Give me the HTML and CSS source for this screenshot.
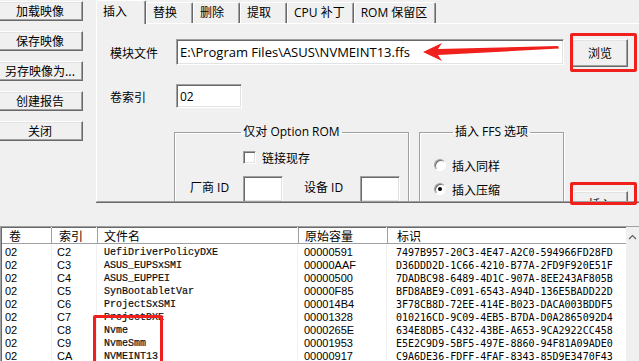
FILE: index.html
```html
<!DOCTYPE html>
<html>
<head>
<meta charset="utf-8">
<link rel="stylesheet" href="styles.css">
</head>
<body>
<div class="window">
  <div class="top">
    <div class="sidebar">
      <button class="btn side-btn">加载映像</button>
      <button class="btn side-btn">保存映像</button>
      <button class="btn side-btn">另存映像为...</button>
      <button class="btn side-btn">创建报告</button>
      <button class="btn side-btn">关闭</button>
    </div>
    <div class="tabctl">
      <div class="tabstrip">
        <div class="tab active">插入</div>
        <div class="tab">替换</div>
        <div class="tab">删除</div>
        <div class="tab">提取</div>
        <div class="tab">CPU 补丁</div>
        <div class="tab">ROM 保留区</div>
      </div>
      <div class="panel">
        <div class="row row-file">
          <span class="label">模块文件</span>
          <div class="input input-file">E:\Program Files\ASUS\NVMEINT13.ffs</div>
          <button class="btn browse">浏览</button>
        </div>
        <div class="row row-vol">
          <span class="label">卷索引</span>
          <div class="input input-vol">02</div>
        </div>
        <div class="groups">
          <fieldset class="group group-rom">
            <legend>仅对 Option ROM</legend>
            <div class="chk-row"><span class="chk"></span><span>链接现存</span></div>
            <div class="id-row">
              <span class="id-label">厂商 ID</span><div class="input input-id"></div>
              <span class="id-label id-label2">设备 ID</span><div class="input input-id"></div>
            </div>
          </fieldset>
          <fieldset class="group group-ffs">
            <legend>插入 FFS 选项</legend>
            <div class="radio-row"><span class="radio"></span><span>插入同样</span></div>
            <div class="radio-row"><span class="radio checked"></span><span>插入压缩</span></div>
          </fieldset>
          <button class="btn insert-btn">插入</button>
        </div>
      </div>
    </div>
  </div>
  <div class="list">
    <div class="list-main">
      <div class="lrow lhead">
        <div class="c c1">卷</div><div class="c c2">索引</div><div class="c c3">文件名</div><div class="c c4">原始容量</div><div class="c c5">标识</div>
      </div>
      <div class="lrow"><div class="c c1">02</div><div class="c c2">C2</div><div class="c c3 mono">UefiDriverPolicyDXE</div><div class="c c4">00000591</div><div class="c c5 mono2">7497B957-20C3-4E47-A2C0-594966FD28FD</div></div>
      <div class="lrow"><div class="c c1">02</div><div class="c c2">C3</div><div class="c c3 mono">ASUS_EUPSxSMI</div><div class="c c4">00000AAF</div><div class="c c5 mono2">D36DDD2D-1C66-4210-B77A-2FD9F920E51F</div></div>
      <div class="lrow"><div class="c c1">02</div><div class="c c2">C4</div><div class="c c3 mono">ASUS_EUPPEI</div><div class="c c4">00000500</div><div class="c c5 mono2">7DADBC98-6489-4D1C-907A-8EE243AF805B</div></div>
      <div class="lrow"><div class="c c1">02</div><div class="c c2">C5</div><div class="c c3 mono">SynBootabletVar</div><div class="c c4">00000F85</div><div class="c c5 mono2">BFD8ABE9-C091-6543-A94D-136E5BADD22D</div></div>
      <div class="lrow"><div class="c c1">02</div><div class="c c2">C6</div><div class="c c3 mono">ProjectSxSMI</div><div class="c c4">000014B4</div><div class="c c5 mono2">3F78CB8D-72EE-414E-B023-DACA003BDDF5</div></div>
      <div class="lrow"><div class="c c1">02</div><div class="c c2">C7</div><div class="c c3 mono">ProjectDXE</div><div class="c c4">00001328</div><div class="c c5 mono2">010216CD-9C09-4EB5-B7DA-D0A2865092D4</div></div>
      <div class="lrow"><div class="c c1">02</div><div class="c c2">C8</div><div class="c c3 mono">Nvme</div><div class="c c4">0000265E</div><div class="c c5 mono2">634E8DB5-C432-43BE-A653-9CA2922CC458</div></div>
      <div class="lrow"><div class="c c1">02</div><div class="c c2">C9</div><div class="c c3 mono">NvmeSmm</div><div class="c c4">00001953</div><div class="c c5 mono2">E5E2C9D9-5BF5-497E-8860-94F81A09ADE0</div></div>
      <div class="lrow"><div class="c c1">02</div><div class="c c2">CA</div><div class="c c3 mono">NVMEINT13</div><div class="c c4">00000917</div><div class="c c5 mono2">C9A6DE36-FDFF-4FAF-8343-85D9E3470F43</div></div>
    </div>
    <div class="vscroll">
      <svg class="up-arrow" width="9" height="6" viewBox="0 0 9 6"><path d="M1 5 L4.5 1.5 L8 5" fill="none" stroke="#606060" stroke-width="1.2"/></svg>
    </div>
  </div>

  <div class="mark mark-browse"></div>
  <div class="mark mark-insert"></div>
  <div class="mark mark-list"></div>
  <svg class="arrow" width="639" height="361" viewBox="0 0 639 361">
    <polygon points="423,52 442,43 438,49 558,46 559,48.5 438,55 442,61" fill="#f0201c"/>
  </svg>
</div>
</body>
</html>
```

FILE: styles.css
```css
* { box-sizing: border-box; }
html, body { margin: 0; padding: 0; }
body {
  width: 639px;
  height: 361px;
  overflow: hidden;
  background: #f0f0f0;
  font-family: "Open Sans", "Noto Sans CJK SC", sans-serif;
  font-size: 12px;
  color: #000;
}
.window {
  position: relative;
  width: 639px;
  height: 361px;
}
.top {
  display: flex;
  height: 226px;
}
.sidebar {
  width: 99px;
  flex: none;
  display: flex;
  flex-direction: column;
  gap: 10px;
  padding-top: 1px;
  margin-left: -3px;
}
.btn {
  font-family: "Noto Sans CJK SC", sans-serif;
  font-size: 12px;
  background: #f0f0f0;
  border: 1px solid;
  border-color: #fff #696969 #696969 #fff;
  box-shadow: inset -1px -1px 0 #a0a0a0, inset 1px 1px 0 #e3e3e3;
  padding: 0;
  color: #000;
  line-height: 1;
}
.side-btn {
  width: 86px;
  height: 20px;
}
.tabctl {
  width: 545px;
  flex: none;
}
.tabstrip {
  display: flex;
  height: 23px;
  align-items: flex-end;
  padding-left: 2px;
}
.tab {
  font-family: "Open Sans", "Noto Sans CJK SC", sans-serif;
  height: 21px;
  min-width: 47px;
  padding: 0 8px 0 6px;
  line-height: 19px;
  border: 1px solid;
  border-bottom: none;
  border-color: #fff #696969 transparent #fff;
  box-shadow: inset -1px 0 0 #a0a0a0;
  border-radius: 2px 2px 0 0;
  white-space: nowrap;
  font-size: 12px;
}
.tab.active {
  height: 24px;
  min-width: 50px;
  margin-bottom: -1px;
  margin-left: -2px;
  padding: 0 6px 0 6px;
  line-height: 22px;
  background: #f0f0f0;
  position: relative;
  z-index: 1;
}
.panel {
  height: 179px;
  border-top: 1px solid #fff;
  border-left: 1px solid #fff;
  border-bottom: 1px solid #a0a0a0;
  box-shadow: 0 1px 0 #696969;
  padding: 13px 0 0 13px;
  overflow: hidden;
  position: relative;
}
.row {
  display: flex;
  align-items: center;
}
.label {
  font-family: "Noto Sans CJK SC", sans-serif;
  width: 66px;
  flex: none;
}
.input {
  background: #fff;
  border: 1px solid;
  border-color: #a0a0a0 #fff #fff #a0a0a0;
  box-shadow: inset 1px 1px 0 #696969, inset -1px -1px 0 #e3e3e3;
  padding: 0 3px;
  display: flex;
  align-items: center;
  white-space: nowrap;
}
.input-file {
  width: 388px;
  height: 26px;
  font-size: 13px;
}
.browse {
  width: 56px;
  height: 28px;
  margin-left: 8px;
  margin-top: 2px;
}
.row-vol {
  margin-top: 17px;
}
.input-vol {
  width: 66px;
  height: 24px;
}
.groups {
  display: flex;
  align-items: flex-start;
  margin-top: 16px;
  margin-left: 64px;
  gap: 10px;
}
.group {
  margin: 0;
  padding: 0;
  border: 1px solid #a0a0a0;
  box-shadow: inset 1px 1px 0 #fff, 1px 1px 0 #fff;
  height: 120px;
  font-family: "Noto Sans CJK SC", sans-serif;
}
.group legend {
  margin: 0 auto;
  padding: 0 2px;
  line-height: 16px;
  font-family: "Open Sans", "Noto Sans CJK SC", sans-serif;
}
.group-rom { width: 235px; }
.group-ffs { width: 145px; }
.chk-row {
  display: flex;
  align-items: center;
  gap: 6px;
  margin: 9px 0 0 68px;
}
.chk {
  width: 13px;
  height: 13px;
  background: #fff;
  border: 1px solid;
  border-color: #a0a0a0 #fff #fff #a0a0a0;
  box-shadow: inset 1px 1px 0 #696969, inset -1px -1px 0 #e3e3e3;
}
.id-row {
  display: flex;
  align-items: flex-start;
  margin-top: 10px;
  padding-left: 15px;
}
.id-label {
  font-family: "Open Sans", "Noto Sans CJK SC", sans-serif;
  width: 53px;
  line-height: 20px;
  padding-top: 2px;
}
.id-label2 {
  width: 56px;
  margin-left: 21px;
}
.input-id {
  width: 40px;
  height: 26px;
}
.radio-row {
  display: flex;
  align-items: center;
  gap: 6px;
  margin-left: 14px;
  height: 16px;
}
.radio-row:first-of-type { margin-top: 17px; }
.radio-row + .radio-row { margin-top: 8px; }
.radio {
  width: 12px;
  height: 12px;
  border-radius: 50%;
  background: #fff;
  border: 1px solid;
  border-color: #a0a0a0 #fff #fff #a0a0a0;
  box-shadow: inset 1px 1px 0 #696969;
  position: relative;
}
.radio.checked::after {
  content: "";
  position: absolute;
  left: 3px;
  top: 3px;
  width: 4px;
  height: 4px;
  border-radius: 50%;
  background: #000;
}
.insert-btn {
  width: 55px;
  height: 26px;
  margin-top: 67px;
  margin-left: -1px;
}

/* list */
.list {
  display: flex;
  height: 135px;
  background: #fff;
  border-top: 1px solid #a0a0a0;
  border-left: 1px solid #a0a0a0;
  box-shadow: inset 1px 1px 0 #696969;
}
.list-main {
  flex: 1;
  overflow: hidden;
  background:
    linear-gradient(#f0f0f0, #f0f0f0) 50px 0 / 1px 100% no-repeat,
    linear-gradient(#f0f0f0, #f0f0f0) 95px 0 / 1px 100% no-repeat,
    linear-gradient(#f0f0f0, #f0f0f0) 296px 0 / 1px 100% no-repeat,
    linear-gradient(#f0f0f0, #f0f0f0) 385px 0 / 1px 100% no-repeat;
}
.lrow {
  display: grid;
  grid-template-columns: 50px 46px 201px 89px 1fr;
  height: 13px;
  line-height: 13px;
  font-family: "Liberation Sans", sans-serif;
  font-size: 11px;
  white-space: nowrap;
}
.lrow.lhead {
  height: 16px;
  line-height: 15px;
  margin-bottom: 2px;
  margin-top: 1px;
  margin-left: 1px;
  font-family: "Noto Sans CJK SC", sans-serif;
  font-size: 12px;
  background: #fff;
  border-bottom: 1px solid #a0a0a0;
}
.lhead .c {
  border-right: 1px solid #a0a0a0;
  box-shadow: 1px 0 0 #fff;
}
.c { overflow: hidden; }
.c1 { padding-left: 4px; }
.c2 { padding-left: 6px; }
.c3 { padding-left: 7px; }
.c4 { padding-left: 6px; }
.c5 { padding-left: 9px; }
.lhead .c1 { padding-left: 7px; }
.lhead .c2 { padding-left: 7px; }
.lhead .c3 { padding-left: 6px; }
.lhead .c4 { padding-left: 6px; }
.lhead .c5 { padding-left: 9px; border-right: none; }
.mono {
  font-family: "Liberation Mono", monospace;
  font-size: 10px;
  color: #111;
  -webkit-text-stroke: 0.2px #000;
}
.mono2 {
  font-family: "DejaVu Sans Mono", monospace;
  font-size: 10px;
}
.vscroll {
  width: 13px;
  flex: none;
  background: #f0f0f0;
  display: flex;
  justify-content: center;
  padding-top: 7px;
}
.up-arrow { display: block; }

/* annotations */
.mark {
  position: absolute;
  border: 3px solid #f0201c;
  border-radius: 2px;
}
.mark-browse { left: 570px; top: 33px; width: 67px; height: 39px; }
.mark-insert { left: 570px; top: 182px; width: 67px; height: 23px; }
.mark-list { left: 93px; top: 315px; width: 70px; height: 52px; }
.arrow { position: absolute; left: 0; top: 0; pointer-events: none; }
```
